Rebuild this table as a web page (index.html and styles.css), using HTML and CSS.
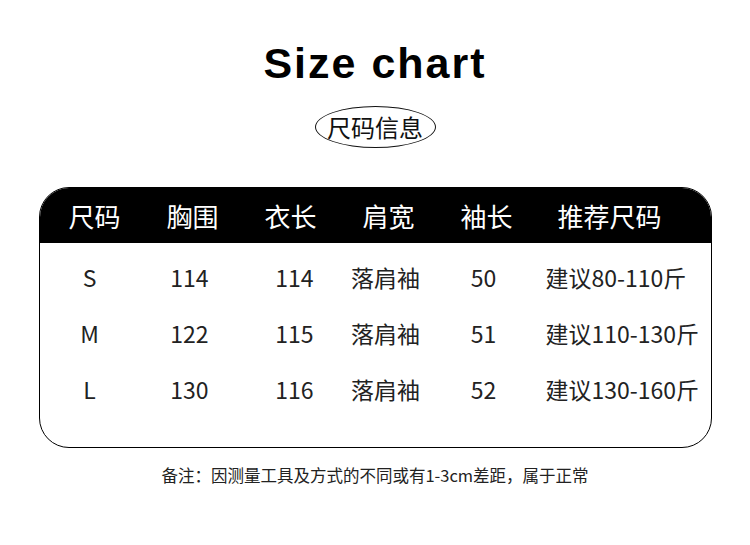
FILE: index.html
```html
<!DOCTYPE html>
<html lang="zh">
<head>
<meta charset="utf-8">
<link rel="stylesheet" href="styles.css">
</head>
<body>
<div class="page">
  <h1 class="title">Size chart</h1>
  <div class="badge">尺码信息</div>
  <div class="table">
    <div class="row head">
      <div class="c">尺码</div>
      <div class="c">胸围</div>
      <div class="c">衣长</div>
      <div class="c">肩宽</div>
      <div class="c">袖长</div>
      <div class="c last">推荐尺码</div>
    </div>
    <div class="body">
      <div class="row">
        <div class="c">S</div>
        <div class="c">114</div>
        <div class="c">114</div>
        <div class="c">落肩袖</div>
        <div class="c">50</div>
        <div class="c last">建议80-110斤</div>
      </div>
      <div class="row">
        <div class="c">M</div>
        <div class="c">122</div>
        <div class="c">115</div>
        <div class="c">落肩袖</div>
        <div class="c">51</div>
        <div class="c last">建议110-130斤</div>
      </div>
      <div class="row">
        <div class="c">L</div>
        <div class="c">130</div>
        <div class="c">116</div>
        <div class="c">落肩袖</div>
        <div class="c">52</div>
        <div class="c last">建议130-160斤</div>
      </div>
    </div>
  </div>
  <p class="note">备注：因测量工具及方式的不同或有1-3cm差距，属于正常</p>
</div>
</body>
</html>
```

FILE: styles.css
```css
html, body {
  margin: 0;
  padding: 0;
  background: #fff;
}
.page {
  width: 750px;
  height: 545px;
  display: flex;
  flex-direction: column;
  align-items: center;
  padding-top: 42px;
  box-sizing: border-box;
  font-family: "Noto Sans CJK SC", sans-serif;
  color: #1a1a1a;
}
.title {
  margin: 0;
  font-family: "Liberation Sans", Arial, sans-serif;
  font-weight: bold;
  font-size: 43px;
  line-height: 43px;
  letter-spacing: 2px;
  color: #000;
}
.badge {
  margin-top: 21px;
  width: 121px;
  height: 42px;
  box-sizing: border-box;
  border: 1.5px solid #111;
  border-radius: 50%;
  display: flex;
  align-items: center;
  justify-content: center;
  font-size: 24px;
  line-height: 1;
  color: #111;
}
.table {
  margin-top: 39px;
  width: 673px;
  height: 261px;
  box-sizing: border-box;
  border: 1.5px solid #000;
  border-radius: 30px;
  overflow: hidden;
  display: flex;
  flex-direction: column;
}
.row {
  display: grid;
  grid-template-columns: 110px 86px 110px 86px 110px 1fr;
  align-items: center;
  height: 56px;
}
.head {
  background: #000;
  color: #fff;
  font-size: 26px;
  height: 55px;
}
.c {
  text-align: center;
  white-space: nowrap;
}
.c.last {
  text-align: left;
  padding-left: 4px;
}
.head .c.last {
  padding-left: 16px;
}
.body {
  padding-top: 6px;
  font-size: 23px;
  color: #222;
}
.body .row {
  grid-template-columns: 100px 100px 110px 72px 124px 1fr;
}
.body .c.last {
  padding-left: 0;
}
.note {
  margin: 17px 0 0;
  font-size: 16.5px;
  line-height: 20px;
  color: #222;
}
```
